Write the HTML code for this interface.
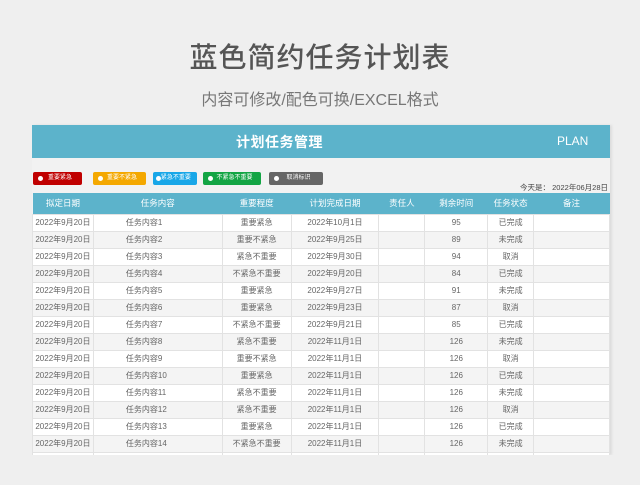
<!DOCTYPE html>
<html><head><meta charset="utf-8"><style>
*{margin:0;padding:0;box-sizing:border-box}
body{width:640px;height:485px;background:#efefef;font-family:"Liberation Sans","Noto Sans CJK SC",sans-serif;position:relative;overflow:hidden;color:#666}
.t1{position:absolute;top:36px;left:0;width:640px;text-align:center;font-size:28px;color:#555;font-weight:500;letter-spacing:1px}
.t2{position:absolute;top:86px;left:0;width:640px;text-align:center;font-size:16px;color:#777}
.sheet{position:absolute;left:32px;top:125px;width:578px;height:330px;background:#f2f2f2;box-shadow:2px 0 2px #ddd}
.bar{position:absolute;left:0;top:0;width:578px;height:33px;background:#5cb3cb;color:#fff}
.bar .h{position:absolute;left:204px;top:7px;font-size:14px;font-weight:bold;letter-spacing:0.5px}
.bar .p{position:absolute;left:525px;top:9px;font-size:12px}
.btn{position:absolute;top:47px;height:13px;border-radius:2px;color:#fff;font-size:6px;line-height:13px;text-align:center}
.btn i{position:absolute;left:5px;top:4px;width:5px;height:5px;border-radius:50%;background:#fff}
.today{position:absolute;right:2px;top:57px;font-size:7.5px;color:#444}
table{position:absolute;left:0;top:68px;border-collapse:collapse;font-size:8px;table-layout:fixed}
th{background:#5cb3cb;color:#fff;font-weight:normal;height:21px;font-size:8.5px;padding:0}
td{height:17px;line-height:15px;padding:0;border:1px solid #e2e2e2;text-align:center;color:#666;vertical-align:middle}
tr:nth-child(even) td{background:#fff}
tr:nth-child(odd) td{background:#f4f4f4}
td.l{text-align:left;padding-left:32px}
</style></head><body>
<div class="t1">蓝色简约任务计划表</div>
<div class="t2">内容可修改/配色可换/EXCEL格式</div>
<div class="sheet">
<div class="bar"><div class="h">计划任务管理</div><div class="p">PLAN</div></div>
<div class="btn" style="left:1px;width:49px;background:#c00000"><i></i>&nbsp;&nbsp;&nbsp;重要紧急</div>
<div class="btn" style="left:61px;width:53px;background:#f4a800"><i></i>&nbsp;&nbsp;&nbsp;重要不紧急</div>
<div class="btn" style="left:121px;width:44px;background:#19a7e8"><i style="left:3px"></i>&nbsp;紧急不重要</div>
<div class="btn" style="left:171px;width:58px;background:#13a544"><i></i>&nbsp;&nbsp;&nbsp;不紧急不重要</div>
<div class="btn" style="left:237px;width:54px;background:#666"><i style="background:#fff"></i>&nbsp;&nbsp;&nbsp;取消标识</div>
<div class="today">今天是：&nbsp;2022年06月28日</div>
<table>
<colgroup><col style="width:61px"><col style="width:129px"><col style="width:69px"><col style="width:88px"><col style="width:46px"><col style="width:63px"><col style="width:46px"><col style="width:76px"></colgroup>
<tr><th>拟定日期</th><th>任务内容</th><th>重要程度</th><th>计划完成日期</th><th>责任人</th><th>剩余时间</th><th>任务状态</th><th>备注</th></tr>
<tr><td>2022年9月20日</td><td class="l">任务内容1</td><td>重要紧急</td><td>2022年10月1日</td><td></td><td>95</td><td>已完成</td><td></td></tr>
<tr><td>2022年9月20日</td><td class="l">任务内容2</td><td>重要不紧急</td><td>2022年9月25日</td><td></td><td>89</td><td>未完成</td><td></td></tr>
<tr><td>2022年9月20日</td><td class="l">任务内容3</td><td>紧急不重要</td><td>2022年9月30日</td><td></td><td>94</td><td>取消</td><td></td></tr>
<tr><td>2022年9月20日</td><td class="l">任务内容4</td><td>不紧急不重要</td><td>2022年9月20日</td><td></td><td>84</td><td>已完成</td><td></td></tr>
<tr><td>2022年9月20日</td><td class="l">任务内容5</td><td>重要紧急</td><td>2022年9月27日</td><td></td><td>91</td><td>未完成</td><td></td></tr>
<tr><td>2022年9月20日</td><td class="l">任务内容6</td><td>重要紧急</td><td>2022年9月23日</td><td></td><td>87</td><td>取消</td><td></td></tr>
<tr><td>2022年9月20日</td><td class="l">任务内容7</td><td>不紧急不重要</td><td>2022年9月21日</td><td></td><td>85</td><td>已完成</td><td></td></tr>
<tr><td>2022年9月20日</td><td class="l">任务内容8</td><td>紧急不重要</td><td>2022年11月1日</td><td></td><td>126</td><td>未完成</td><td></td></tr>
<tr><td>2022年9月20日</td><td class="l">任务内容9</td><td>重要不紧急</td><td>2022年11月1日</td><td></td><td>126</td><td>取消</td><td></td></tr>
<tr><td>2022年9月20日</td><td class="l">任务内容10</td><td>重要紧急</td><td>2022年11月1日</td><td></td><td>126</td><td>已完成</td><td></td></tr>
<tr><td>2022年9月20日</td><td class="l">任务内容11</td><td>紧急不重要</td><td>2022年11月1日</td><td></td><td>126</td><td>未完成</td><td></td></tr>
<tr><td>2022年9月20日</td><td class="l">任务内容12</td><td>紧急不重要</td><td>2022年11月1日</td><td></td><td>126</td><td>取消</td><td></td></tr>
<tr><td>2022年9月20日</td><td class="l">任务内容13</td><td>重要紧急</td><td>2022年11月1日</td><td></td><td>126</td><td>已完成</td><td></td></tr>
<tr><td>2022年9月20日</td><td class="l">任务内容14</td><td>不紧急不重要</td><td>2022年11月1日</td><td></td><td>126</td><td>未完成</td><td></td></tr>
<tr><td style="height:5px"></td><td style="height:5px"></td><td></td><td></td><td></td><td></td><td></td><td></td></tr>
</table>
</div>
<div style="position:absolute;left:0;top:455px;width:640px;height:30px;background:#efefef"></div>
</body></html>
